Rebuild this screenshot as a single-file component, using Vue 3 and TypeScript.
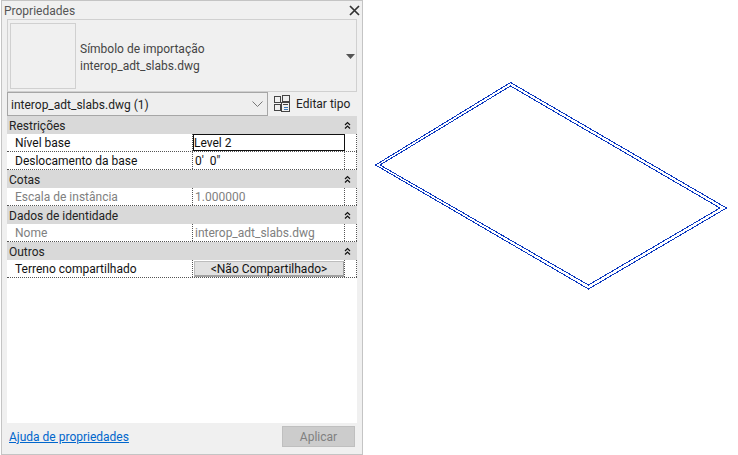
<script setup lang="ts">
type Row = { label: string; value: string; kind: 'active' | 'text' | 'muted' | 'button' }
type Group = { title: string; rows: Row[] }

const groups: Group[] = [
  {
    title: 'Restrições',
    rows: [
      { label: 'Nível base', value: 'Level 2', kind: 'active' },
      { label: 'Deslocamento da base', value: "0'  0\"", kind: 'text' },
    ],
  },
  { title: 'Cotas', rows: [{ label: 'Escala de instância', value: '1.000000', kind: 'muted' }] },
  { title: 'Dados de identidade', rows: [{ label: 'Nome', value: 'interop_adt_slabs.dwg', kind: 'muted' }] },
  { title: 'Outros', rows: [{ label: 'Terreno compartilhado', value: '<Não Compartilhado>', kind: 'button' }] },
]
</script>

<template>
  <div class="page">
    <section class="panel">
      <header class="titlebar">
        <span class="title">Propriedades</span>
        <svg class="close" width="11" height="11" viewBox="0 0 11 11">
          <path d="M1 1 L10 10 M10 1 L1 10" stroke="#333" stroke-width="1.7" fill="none" />
        </svg>
      </header>

      <div class="type-box">
        <div class="thumb"></div>
        <div class="type-text">
          <div>Símbolo de importação</div>
          <div>interop_adt_slabs.dwg</div>
        </div>
        <svg class="type-arrow" width="9" height="5" viewBox="0 0 9 5">
          <path d="M0 0 H9 L4.5 5 Z" fill="#555" />
        </svg>
      </div>

      <div class="selector-row">
        <div class="selector">
          <span>interop_adt_slabs.dwg (1)</span>
          <svg width="11" height="6" viewBox="0 0 11 6">
            <path d="M0.5 0.5 L5.5 5.5 L10.5 0.5" stroke="#777" fill="none" />
          </svg>
        </div>
        <div class="edit-type">
          <svg width="17" height="17" viewBox="0 0 17 17">
            <g fill="none" stroke="#444" shape-rendering="crispEdges">
              <rect x="0.5" y="1.5" width="6" height="6" />
              <rect x="8.5" y="0.5" width="7" height="6" />
              <rect x="0.5" y="9.5" width="6" height="6" />
              <rect x="7.5" y="7.5" width="8" height="9" />
            </g>
            <path d="M9 9.5 H14" stroke="#444" shape-rendering="crispEdges" />
            <path d="M10 12 H13.5 M10 14 H13.5" stroke="#3a78b8" shape-rendering="crispEdges" />
          </svg>
          <span>Editar tipo</span>
        </div>
      </div>

      <div class="grid">
        <template v-for="g in groups" :key="g.title">
          <div class="group">
            <span>{{ g.title }}</span>
            <svg width="7" height="9" viewBox="0 0 7 9">
              <path d="M1 4 L3.5 1.5 L6 4 M1 7.5 L3.5 5 L6 7.5" stroke="#111" stroke-width="1.2" fill="none" />
            </svg>
          </div>
          <div v-for="r in g.rows" :key="r.label" class="row" :class="{ muted: r.kind === 'muted' }">
            <div class="cell-label">{{ r.label }}</div>
            <div class="cell-value" :class="r.kind">
              <span class="value-inner">{{ r.value }}</span>
            </div>
            <div class="cell-end"></div>
          </div>
        </template>
      </div>

      <footer class="footer">
        <a class="help">Ajuda de propriedades</a>
        <div class="apply">Aplicar</div>
      </footer>
    </section>

    <svg class="canvas" width="375" height="455" viewBox="363 0 375 455">
      <g fill="none" stroke="#0a37c0" stroke-width="1" shape-rendering="crispEdges">
        <path d="M510.5 82.5 L375.5 165 L588.5 289 L726.5 208 Z" />
        <path d="M510.5 86 L380 165 L588.5 285 L720 208 Z" />
      </g>
    </svg>
  </div>
</template>

<style scoped>
.page {
  display: flex;
  width: 738px;
  height: 455px;
  background: #fff;
  font-family: Roboto, "Open Sans", sans-serif;
  font-size: 12px;
  overflow: hidden;
}
.panel {
  box-sizing: border-box;
  width: 362px;
  height: 455px;
  margin-left: 1px;
  background: #f0f0f0;
  border: 1px solid #c4c4c4;
  display: flex;
  flex-direction: column;
  padding: 0 5px;
  color: #111;
}
.titlebar {
  height: 18px;
  flex: none;
  display: flex;
  align-items: center;
  justify-content: space-between;
  color: #555;
  margin-left: -3px;
}
.title { padding-top: 2px; }
.close { margin-right: -3px; }
.type-box {
  box-sizing: border-box;
  height: 73px;
  flex: none;
  border: 1px solid #d0d0d0;
  display: flex;
  align-items: center;
  padding: 2px;
}
.thumb {
  box-sizing: border-box;
  width: 66px;
  height: 66px;
  border: 1px solid #d0d0d0;
  flex: none;
}
.type-text {
  flex: 1;
  margin-left: 4px;
  line-height: 17px;
  color: #444;
  padding-top: 5px;
}
.type-arrow { margin: 2px -1px 0 0; }
.selector-row {
  display: flex;
  flex: none;
  height: 24px;
}
.selector {
  box-sizing: border-box;
  width: 261px;
  height: 24px;
  border: 1px solid #a6a6a6;
  background: #eee;
  display: flex;
  align-items: center;
  justify-content: space-between;
  padding: 0 4px 0 3px;
  color: #222;
}
.selector span { padding-top: 2px; }
.edit-type {
  display: flex;
  align-items: center;
  gap: 5px;
  margin-left: 6px;
  margin-top: -2px;
  color: #222;
}
.edit-type span { padding-top: 2px; }
.grid {
  flex: 1;
  background: #fff;
}
.group {
  box-sizing: border-box;
  height: 18px;
  background: #d9d9d9;
  display: flex;
  align-items: center;
  justify-content: space-between;
  padding: 1px 6px 0 2px;
  color: #222;
}
.row {
  box-sizing: border-box;
  height: 18px;
  display: flex;
  border-bottom: 1px dotted #555;
}
.cell-label {
  box-sizing: border-box;
  width: 186px;
  padding-left: 8px;
  line-height: 18px;
  border-right: 1px dotted #555;
}
.cell-value {
  box-sizing: border-box;
  width: 152px;
  padding-left: 2px;
  line-height: 18px;
  white-space: pre;
  border-right: 1px dotted #555;
}
.cell-end { flex: 1; border-right: 1px dotted #555; }
.muted .cell-label, .muted .cell-value { color: #808080; }
.cell-value.active {
  height: 17px;
  border: 1px solid #111;
  padding-left: 0;
  line-height: 16px;
  color: #111;
}
.cell-value.button {
  padding: 0;
  display: flex;
}
.cell-value.button .value-inner {
  box-sizing: border-box;
  display: block;
  width: 150px;
  height: 16px;
  margin: 1px 0 0 1px;
  text-align: center;
  background: #e1e1e1;
  border: 1px solid #bdbdbd;
  border-right-color: #a0a0a0;
  border-bottom: 2px solid #a0a0a0;
  line-height: 14px;
}
.footer {
  flex: none;
  height: 31px;
  display: flex;
  align-items: center;
  justify-content: space-between;
  padding: 0 2px 4px;
  box-sizing: border-box;
}
.help {
  color: #0066cc;
  text-decoration: underline;
}
.apply {
  box-sizing: border-box;
  width: 73px;
  height: 21px;
  background: #cccccc;
  border: 1px solid #bfbfbf;
  color: #808080;
  text-align: center;
  line-height: 20px;
}
.canvas { display: block; flex: none; }
</style>
